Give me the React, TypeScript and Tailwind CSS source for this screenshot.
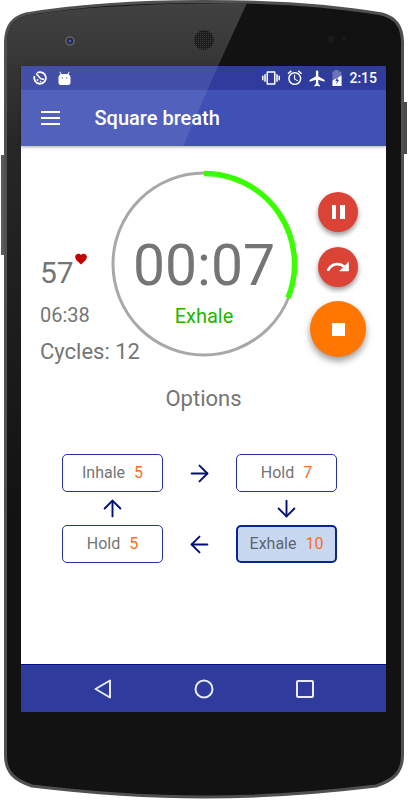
import { ArrowDown, ArrowLeft, ArrowRight, ArrowUp } from 'lucide-react';

function PhoneBody() {
    return (
        <svg className="absolute inset-0" width="408" height="800" viewBox="0 0 408 800">
            <defs>
                <linearGradient id="glare" gradientUnits="userSpaceOnUse" x1="0" y1="0" x2="0" y2="520">
                    <stop offset="0" stopColor="#424242" />
                    <stop offset="0.27" stopColor="#272727" />
                    <stop offset="1" stopColor="#121212" />
                </linearGradient>
                <pattern id="grille" width="2" height="2" patternUnits="userSpaceOnUse">
                    <rect width="2" height="2" fill="#1c1c1c" />
                    <rect width="1" height="1" fill="#3a3a3a" />
                </pattern>
            </defs>
            <rect x="1" y="155" width="6" height="100" fill="#5c5c5c" />
            <rect x="402" y="102" width="5" height="52" fill="#4a4a4a" />
            <path
                d="M5.5 42 C6 26 12 18 26 14 C80 5 150 1.5 204 1.5 C258 1.5 328 5 382 14 C396 18 402 26 402.5 42 L402.5 755 C402.5 772 394 780 376 786 C318 793 258 797 204 797 C150 797 90 793 32 786 C14 780 5.5 772 5.5 755 Z"
                fill="#121212"
                stroke="#505050"
                strokeWidth="3"
            />
            <path
                d="M7 42 C7.5 27 13 19.5 27 15.5 C80 6.5 160 3 247 3 L218 66 L21 66 L21 520 L7 520 Z"
                fill="url(#glare)"
            />
            <circle cx="70" cy="41" r="5" fill="#5a5a5a" />
            <circle cx="70" cy="41" r="3" fill="#1a1f4a" />
            <circle cx="70" cy="41" r="1.5" fill="#4a60c0" />
            <circle cx="204" cy="40" r="10" fill="url(#grille)" />
            <circle cx="331" cy="39" r="3.5" fill="#1a1a1a" />
            <circle cx="344" cy="39" r="2" fill="#1a1a1a" />
        </svg>
    );
}

function StatusIcons() {
    return (
        <div className="flex items-center text-white">
            <svg width="18" height="18" viewBox="0 0 24 24" fill="currentColor">
                <path d="M0 15h2V9H0v6zm3 2h2V7H3v10zm19-8v6h2V9h-2zm-3 8h2V7h-2v10zM16.5 3h-9C6.67 3 6 3.67 6 4.5v15c0 .83.67 1.5 1.5 1.5h9c.83 0 1.5-.67 1.5-1.5v-15c0-.83-.67-1.5-1.5-1.5zM16 19H8V5h8v14z" />
            </svg>
            <svg className="ml-[5.5px]" width="17.5" height="17.5" viewBox="0 0 24 24" fill="currentColor">
                <path d="M22 5.72l-4.6-3.86-1.29 1.53 4.6 3.86L22 5.72zM7.88 3.39L6.6 1.86 2 5.71l1.29 1.53 4.59-3.85zM12.5 8H11v6l4.75 2.85.75-1.23-4-2.37V8zM12 4c-4.97 0-9 4.03-9 9s4.03 9 9 9 9-4.03 9-9-4.03-9-9-9zm0 16c-3.87 0-7-3.13-7-7s3.13-7 7-7 7 3.13 7 7-3.13 7-7 7z" />
            </svg>
            <svg className="ml-[4.7px]" width="19" height="19" viewBox="0 0 24 24" fill="currentColor">
                <path d="M21 16v-2l-8-5V3.5c0-.83-.67-1.5-1.5-1.5S10 2.67 10 3.5V9l-8 5v2l8-2.5V19l-2 1.5V22l3.5-1 3.5 1v-1.5L13 19v-5.5l8 2.5z" />
            </svg>
            <svg className="ml-[5.6px]" width="10" height="16" viewBox="1 0 9 16">
                <path d="M3 0h4v1.5h3V16H1V1.5h2z" fill="#ffffff" fillOpacity="0.3" />
                <path d="M1 10.5l9-5V16H1z" fill="#ffffff" />
                <path d="M6.2 6.5L3.8 11H5.5L4.6 14.5L7.6 9.8H5.9z" fill="#2f3c9e" />
            </svg>
            <span className="ml-[7px] text-[14px] leading-none font-medium">2:15</span>
        </div>
    );
}

function Ring() {
    return (
        <svg width="186" height="186" viewBox="0 0 186 186" className="shrink-0">
            <circle cx="93" cy="93" r="91" fill="none" stroke="#a8a8a8" strokeWidth="3" />
            <path
                d="M93 2.5 A90.5 90.5 0 0 1 177 126.9"
                fill="none"
                stroke="#39ff00"
                strokeWidth="5.5"
            />
        </svg>
    );
}

function PhaseBox({ label, value, active = false }: { label: string; value: number; active?: boolean }) {
    return (
        <div
            className={
                active
                    ? 'flex items-center justify-center gap-[9px] rounded-[5px] border-2 border-[#0a2490] bg-[#c8d8f1] text-[16px] text-[#5f6470]'
                    : 'flex items-center justify-center gap-[9px] rounded-[5px] border border-[#2233a0] text-[16px] text-[#757575]'
            }
        >
            <span>{label}</span>
            <span className="text-[#ff6d1a]">{value}</span>
        </div>
    );
}

export default function App() {
    return (
        <div className="relative h-[800px] w-[408px] overflow-hidden bg-white font-['Roboto',sans-serif]">
            <PhoneBody />
            <div className="relative ml-[21px] flex h-[712px] w-[365px] flex-col pt-[66px]">
                <div className="relative z-10 shadow-[0_1px_3px_rgba(0,0,0,0.35)]">
                    <div className="flex h-[24px] items-center justify-between bg-[#2f3c9e] pr-[9px] pl-[12px]">
                        <div className="flex items-center gap-[11px] text-white">
                            <svg width="14" height="14" viewBox="0 0 14 14">
                                <path d="M4.2 1.9 A5.8 5.8 0 1 1 1.6 5" fill="none" stroke="currentColor" strokeWidth="1.8" />
                                <path d="M3 2.5 L7.5 7.5 L11 8.5" fill="none" stroke="currentColor" strokeWidth="1.5" />
                                <circle cx="4.5" cy="9" r="0.9" fill="currentColor" />
                                <circle cx="7.5" cy="10.5" r="0.8" fill="currentColor" />
                            </svg>
                            <svg width="13" height="15" viewBox="1 0 12 15" fill="currentColor">
                                <path d="M2.5 0.5 L4 3 H10 L11.5 0.5 L12 1 L11 3.4 C12.3 4 13 5 13 6.5 V11.5 C13 13.2 12 14 10.5 14 H3.5 C2 14 1 13.2 1 11.5 V6.5 C1 5 1.7 4 3 3.4 L2 1 Z" />
                                <circle cx="4.8" cy="7" r="0.8" fill="#5560ac" />
                                <circle cx="9.2" cy="7" r="0.8" fill="#5560ac" />
                            </svg>
                        </div>
                        <StatusIcons />
                    </div>
                    <div className="flex h-[56px] items-center bg-[#3f51b5] pl-[19.5px] text-white">
                        <svg width="19" height="14" viewBox="0 0 19 14" fill="currentColor">
                            <rect width="19" height="2" />
                            <rect y="6" width="19" height="2" />
                            <rect y="12" width="19" height="2" />
                        </svg>
                        <span className="ml-[35px] text-[20px] font-medium">Square breath</span>
                    </div>
                    <div className="absolute inset-0 bg-white/10 [clip-path:polygon(0_0,197px_0,162px_80px,0_80px)]" />
                </div>

                <div className="flex flex-1 flex-col bg-white">
                    <div className="flex items-start pt-[25px] pl-[19px]">
                        <div className="flex w-[71px] flex-col pt-[82px] whitespace-nowrap text-[#757575]">
                            <div className="flex items-start">
                                <span className="text-[30px] leading-[40px]">57</span>
                                <svg className="mt-[-1px]" width="14" height="14" viewBox="0 0 24 24" fill="#c40000">
                                    <path d="M12 21.35l-1.45-1.32C5.4 15.36 2 12.28 2 8.5 2 5.42 4.42 3 7.5 3c1.74 0 3.41.81 4.5 2.09C13.09 3.81 14.76 3 16.5 3 19.58 3 22 5.42 22 8.5c0 3.78-3.4 6.86-8.55 11.54L12 21.35z" />
                                </svg>
                            </div>
                            <span className="mt-[9px] text-[20px] leading-[26px]">06:38</span>
                            <span className="mt-[10px] text-[22px] leading-[28px]">Cycles: 12</span>
                        </div>
                        <div className="relative">
                            <Ring />
                            <div className="absolute inset-0 flex flex-col items-center pt-[62px]">
                                <span className="text-[57px] leading-[66px] text-[#757575]">00:07</span>
                                <span className="mt-[4px] text-[20px] leading-[26px] text-[#22b500]">Exhale</span>
                            </div>
                        </div>
                        <div className="ml-[13px] flex w-[56px] flex-col items-center gap-[15px] pt-[21px]">
                            <div className="flex h-[40px] w-[40px] items-center justify-center rounded-full bg-[#da4336] shadow-[0_3px_5px_rgba(0,0,0,0.4)]">
                                <div className="flex gap-[4px]">
                                    <div className="h-[14px] w-[4.5px] bg-white" />
                                    <div className="h-[14px] w-[4.5px] bg-white" />
                                </div>
                            </div>
                            <div className="flex h-[40px] w-[40px] items-center justify-center rounded-full bg-[#da4336] shadow-[0_3px_5px_rgba(0,0,0,0.4)]">
                                <svg width="26" height="26" viewBox="0 0 24 24" fill="#ffffff">
                                    <path d="M18.4 10.6C16.55 8.99 14.15 8 11.5 8c-4.65 0-8.58 3.03-9.96 7.22L3.9 16c1.05-3.19 4.05-5.5 7.6-5.5 1.95 0 3.73.72 5.12 1.88L13 16h9V7l-3.6 3.6z" />
                                </svg>
                            </div>
                            <div className="mt-[-1px] flex h-[56px] w-[56px] items-center justify-center rounded-full bg-[#ff7700] shadow-[0_4px_7px_rgba(0,0,0,0.4)]">
                                <div className="h-[13px] w-[13px] bg-white" />
                            </div>
                        </div>
                    </div>

                    <div className="mt-[19px] text-center text-[22px] leading-[28px] text-[#757575]">Options</div>

                    <div className="mt-[41px] ml-[41px] grid grid-cols-[101px_73px_101px] grid-rows-[38px_33px_38px] text-[#00107a]">
                        <PhaseBox label="Inhale" value={5} />
                        <div className="flex items-center justify-center">
                            <ArrowRight size={27} strokeWidth={1.7} />
                        </div>
                        <PhaseBox label="Hold" value={7} />
                        <div className="flex items-center justify-center">
                            <ArrowUp size={27} strokeWidth={1.7} />
                        </div>
                        <div />
                        <div className="flex items-center justify-center">
                            <ArrowDown size={27} strokeWidth={1.7} />
                        </div>
                        <PhaseBox label="Hold" value={5} />
                        <div className="flex items-center justify-center">
                            <ArrowLeft size={27} strokeWidth={1.7} />
                        </div>
                        <PhaseBox label="Exhale" value={10} active />
                    </div>
                </div>

                <div className="grid h-[48px] shrink-0 grid-cols-3 place-items-center border-t border-[#00108a] bg-[#2f3c9e] px-[31px] text-[#e8eaf6]">
                    <svg width="20" height="22" viewBox="0 0 20 22" fill="none" stroke="currentColor" strokeWidth="2" strokeLinejoin="round">
                        <path d="M17 2.5V19.5L2.5 11Z" />
                    </svg>
                    <svg width="20" height="20" viewBox="0 0 20 20" fill="none" stroke="currentColor" strokeWidth="2">
                        <circle cx="10" cy="10" r="8.5" />
                    </svg>
                    <svg width="18" height="18" viewBox="0 0 18 18" fill="none" stroke="currentColor" strokeWidth="2">
                        <rect x="1" y="1" width="16" height="16" rx="1" />
                    </svg>
                </div>
            </div>
        </div>
    );
}
